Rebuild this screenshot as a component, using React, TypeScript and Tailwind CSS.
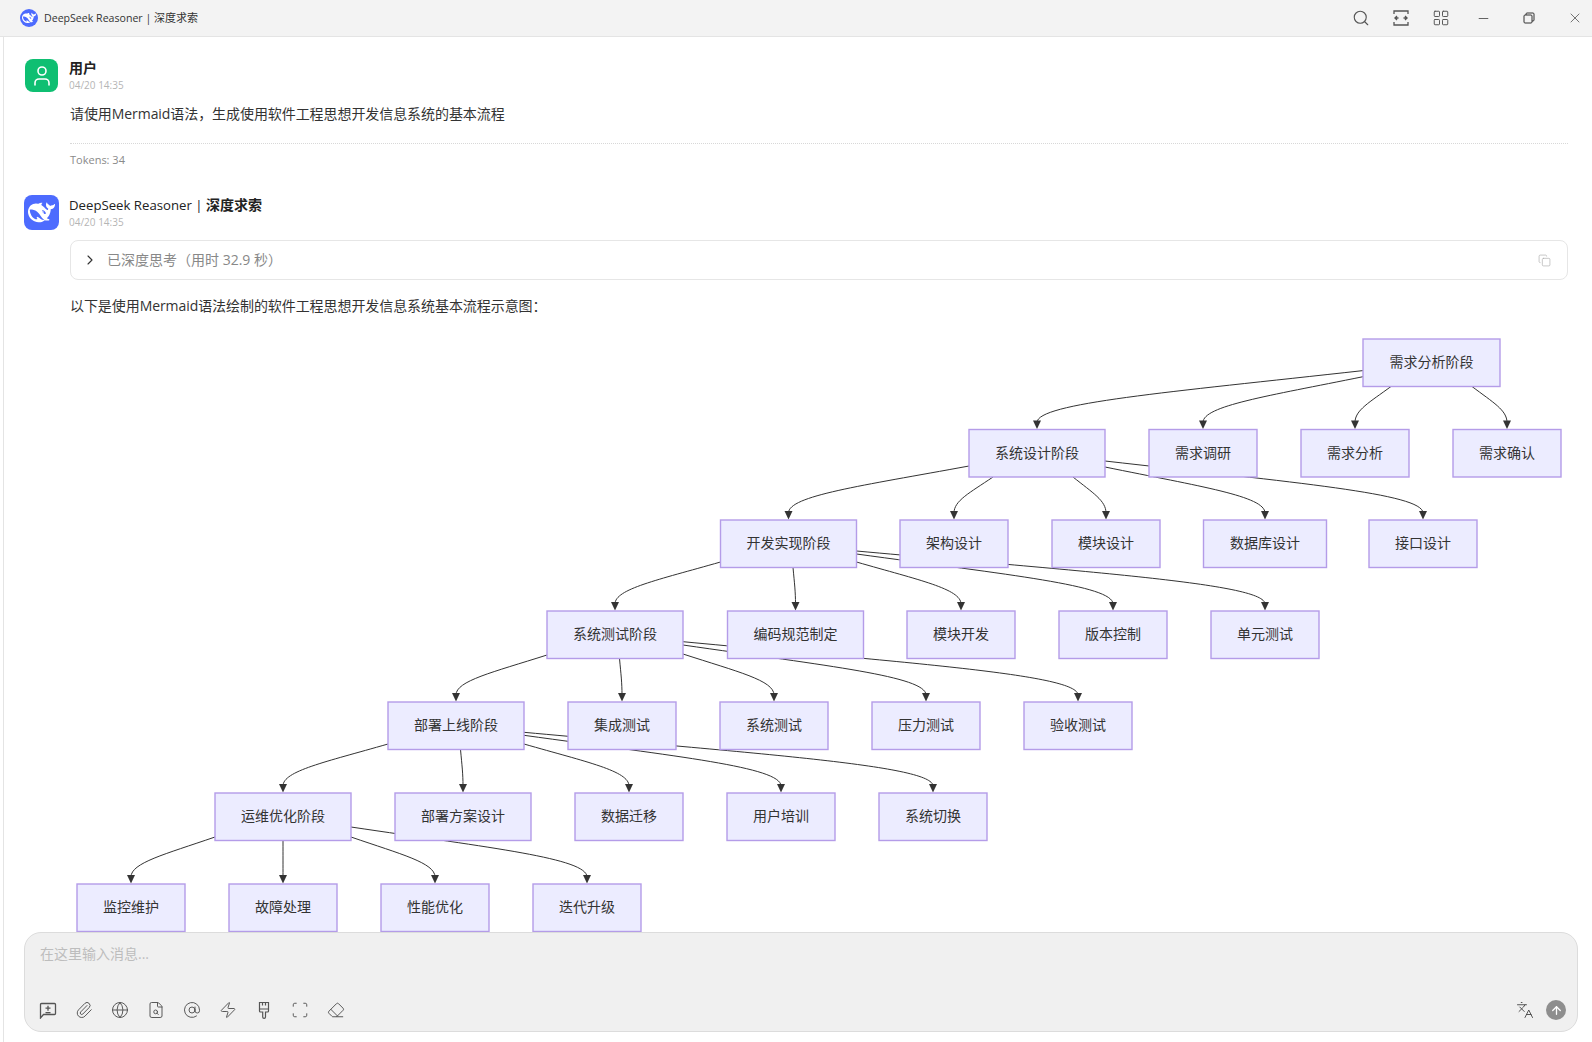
import {
  AtSign,
  ArrowUp,
  ChevronRight,
  Copy,
  Eraser,
  FileSearch,
  Globe,
  Languages,
  LayoutGrid,
  Minus,
  Paperclip,
  Scan,
  Search,
  User,
  X,
  Zap,
} from "lucide-react";
import type { ReactNode } from "react";

const WHALE =
  "M23.748 4.482c-.254-.124-.364.113-.512.234-.051.039-.094.09-.137.136-.372.397-.806.657-1.373.626-.829-.046-1.537.214-2.163.848-.133-.782-.575-1.248-1.247-1.548-.352-.156-.708-.311-.955-.65-.172-.241-.219-.51-.305-.774-.055-.16-.11-.323-.293-.35-.2-.031-.278.136-.356.276-.313.572-.434 1.202-.422 1.84.027 1.436.633 2.58 1.838 3.393.137.093.172.187.129.323-.082.28-.18.552-.266.833-.055.179-.137.217-.329.14a5.526 5.526 0 01-1.736-1.18c-.857-.828-1.631-1.742-2.597-2.458a11.365 11.365 0 00-.689-.471c-.985-.957.13-1.743.388-1.836.27-.098.093-.432-.779-.428-.872.004-1.67.295-2.687.684a3.055 3.055 0 01-.465.137 9.597 9.597 0 00-2.883-.102c-1.885.21-3.39 1.102-4.497 2.623C.082 8.606-.231 10.684.152 12.85c.403 2.284 1.569 4.175 3.36 5.653 1.858 1.533 3.997 2.284 6.438 2.14 1.482-.085 3.133-.284 4.994-1.86.47.234.962.327 1.78.397.63.059 1.236-.03 1.705-.128.735-.156.684-.837.419-.961-2.155-1.004-1.682-.595-2.113-.926 1.096-1.296 2.746-2.642 3.392-7.003.05-.347.007-.565 0-.845-.004-.17.035-.237.23-.256a4.173 4.173 0 001.545-.475c1.396-.763 1.96-2.015 2.093-3.517.02-.23-.004-.467-.247-.588zM11.581 18c-2.089-1.642-3.102-2.183-3.52-2.16-.392.024-.321.471-.235.763.09.288.207.486.371.739.114.167.192.416-.113.603-.673.416-1.842-.14-1.897-.167-1.361-.802-2.5-1.86-3.301-3.307-.774-1.393-1.224-2.887-1.298-4.482-.02-.386.093-.522.477-.592a4.696 4.696 0 011.529-.039c2.132.312 3.946 1.265 5.468 2.774.868.86 1.525 1.887 2.202 2.891.72 1.066 1.494 2.082 2.48 2.914.348.292.625.514.891.677-.802.09-2.14.11-3.054-.614zm1-6.44a.306.306 0 01.415-.287.302.302 0 01.2.288.306.306 0 01-.31.307.303.303 0 01-.304-.308zm3.11 1.596c-.2.081-.399.151-.59.16a1.245 1.245 0 01-.798-.254c-.274-.23-.47-.358-.552-.758a1.73 1.73 0 01.016-.588c.07-.327-.008-.537-.239-.727-.187-.156-.426-.199-.688-.199a.559.559 0 01-.254-.078c-.11-.054-.2-.19-.114-.358.028-.054.16-.186.192-.21.356-.202.767-.136 1.146.016.352.144.618.408 1.001.782.391.451.462.576.685.914.176.265.336.537.445.848.067.195-.019.354-.25.452z";

function Whale({ size }: { size: number }) {
  return (
    <svg width={size} height={size} viewBox="0 0 24 24" fill="#fff">
      <path d={WHALE} />
    </svg>
  );
}

// Diagram coordinates are page pixels, the viewBox starts at the svg's own offset
const NODE_H = 47.5;
const ROW_TOPS = [339, 429.5, 520, 611, 702, 793, 884];

const NODES: [number, number, number, string][] = [
  [0, 1363, 137, "需求分析阶段"],
  [1, 969, 136, "系统设计阶段"],
  [1, 1149, 108, "需求调研"],
  [1, 1301, 108, "需求分析"],
  [1, 1453, 108, "需求确认"],
  [2, 720.5, 136, "开发实现阶段"],
  [2, 900, 108, "架构设计"],
  [2, 1052, 108, "模块设计"],
  [2, 1203.5, 123, "数据库设计"],
  [2, 1369, 108, "接口设计"],
  [3, 547, 136, "系统测试阶段"],
  [3, 727.5, 136, "编码规范制定"],
  [3, 907, 108, "模块开发"],
  [3, 1059, 108, "版本控制"],
  [3, 1211, 108, "单元测试"],
  [4, 388, 136, "部署上线阶段"],
  [4, 568, 108, "集成测试"],
  [4, 720, 108, "系统测试"],
  [4, 872, 108, "压力测试"],
  [4, 1024, 108, "验收测试"],
  [5, 215, 136, "运维优化阶段"],
  [5, 395, 136, "部署方案设计"],
  [5, 575, 108, "数据迁移"],
  [5, 727, 108, "用户培训"],
  [5, 879, 108, "系统切换"],
  [6, 77, 108, "监控维护"],
  [6, 229, 108, "故障处理"],
  [6, 381, 108, "性能优化"],
  [6, 533, 108, "迭代升级"],
];

// [start x, start y, arrow x, row the arrow lands on]
const EDGES: [number, number, number, number][] = [
  [1363, 370.6, 1037, 1],
  [1363, 376.7, 1203, 1],
  [1391, 386.5, 1355, 1],
  [1472, 386.5, 1507, 1],
  [969, 466, 788.5, 2],
  [993, 477, 954, 2],
  [1073, 477, 1106, 2],
  [1105, 467, 1265, 2],
  [1105, 461, 1423, 2],
  [720.5, 562, 615, 3],
  [793, 567.5, 795.5, 3],
  [856.5, 562, 961, 3],
  [856.5, 554, 1113, 3],
  [856.5, 551, 1265, 3],
  [547, 655, 456, 4],
  [619.5, 658.5, 622, 4],
  [683, 654, 774, 4],
  [683, 645, 926, 4],
  [683, 641.7, 1078, 4],
  [388, 744, 283, 5],
  [460.5, 749.5, 463, 5],
  [524, 744, 629, 5],
  [524, 735.3, 781, 5],
  [524, 732.3, 933, 5],
  [215, 837, 131, 6],
  [283, 840.5, 283, 6],
  [351, 837, 435, 6],
  [351, 827, 587, 6],
];

function edgePath(x1: number, y1: number, x2: number, y2: number) {
  const dx = x2 - x1;
  const dy = y2 - y1;
  return `M${x1} ${y1} C${x1 + 0.6 * dx} ${y1 + 0.37 * dy} ${x2} ${y1 + 0.55 * dy} ${x2} ${y2 - 7}`;
}

function Flowchart() {
  return (
    <svg className="mt-[14px] block" width={1497} height={612} viewBox="70 330 1497 612">
      {EDGES.map(([x1, y1, x2, row]) => {
        const y2 = ROW_TOPS[row];
        return (
          <g key={`${x1}-${y1}-${x2}`}>
            <path d={edgePath(x1, y1, x2, y2)} fill="none" stroke="#333" strokeWidth={1} />
            <polygon points={`${x2 - 4},${y2 - 9} ${x2 + 4},${y2 - 9} ${x2},${y2 - 0.5}`} fill="#333" />
          </g>
        );
      })}
      {NODES.map(([row, x, w, label]) => (
        <g key={`${row}-${label}`}>
          <rect x={x} y={ROW_TOPS[row]} width={w} height={NODE_H} fill="#ECECFF" stroke="#b49ce8" strokeWidth={1.4} />
          <text
            x={x + w / 2}
            y={ROW_TOPS[row] + NODE_H / 2 - 1}
            textAnchor="middle"
            dominantBaseline="central"
            fontSize={14}
            fill="#333"
          >
            {label}
          </text>
        </g>
      ))}
    </svg>
  );
}

function TitleBar() {
  return (
    <header className="flex h-[37px] shrink-0 items-center overflow-hidden border-b border-[#e4e4e4] bg-[#f3f3f3]">
      <div className="ml-5 flex h-[18px] w-[18px] items-center justify-center rounded-full bg-[#4d6bfe]">
        <Whale size={14} />
      </div>
      <span className="ml-[6px] text-[10.6px] text-[#333]">
        DeepSeek Reasoner | <span className="text-[11px]">深度求索</span>
      </span>
      <div className="ml-auto mr-[-6px] flex items-center text-[#555]">
        <span className="flex w-10 justify-center">
          <Search size={18} strokeWidth={1.5} />
        </span>
        <span className="flex w-10 justify-center">
          <svg width="18" height="18" viewBox="0 0 18 18" fill="none" stroke="currentColor" strokeWidth="1.3">
            <path d="M2 5V2h14v3M2 13v3h14v-3M2.5 9h4M11.5 9h4M5 7 3 9l2 2M13 7l2 2-2 2" />
          </svg>
        </span>
        <span className="flex w-10 justify-center">
          <LayoutGrid size={18} strokeWidth={1.3} />
        </span>
        <span className="ml-[-1px] flex w-[46px] justify-center text-[#333]">
          <Minus size={15} strokeWidth={1.2} />
        </span>
        <span className="flex w-[46px] justify-center text-[#333]">
          <svg width="12" height="12" viewBox="0 0 12 12" fill="none" stroke="currentColor" strokeWidth="1">
            <rect x="1" y="3" width="8" height="8" rx="1" />
            <path d="M3 3V2a1 1 0 0 1 1-1h6a1 1 0 0 1 1 1v6a1 1 0 0 1-1 1H9" />
          </svg>
        </span>
        <span className="flex w-[46px] justify-center pr-[1px] text-[#333]">
          <X size={16} strokeWidth={1} />
        </span>
      </div>
    </header>
  );
}

function MessageHeader({ avatar, name }: { avatar: ReactNode; name: ReactNode }) {
  return (
    <div className="flex">
      {avatar}
      <div className="ml-[10px]">
        <div className="h-[18px] text-[13.2px] leading-[18px] text-[#222]">{name}</div>
        <div className="mt-[2px] text-[10px] leading-[14px] text-[#b5b5b5]">04/20 14:35</div>
      </div>
    </div>
  );
}

function ChatArea() {
  return (
    <main className="min-h-0 flex-1 overflow-hidden pl-5 pr-6 pt-[21px]">
      <MessageHeader
        avatar={
          <div className="ml-px mr-px mt-px flex h-[33px] w-[33px] items-center justify-center rounded-lg bg-[#0fbf72] text-white">
            <User size={24} strokeWidth={1.6} />
          </div>
        }
        name={<b className="text-sm">用户</b>}
      />
      <div className="ml-[46px]">
        <p className="mt-[12px] text-sm leading-5 tracking-[-0.005em] text-[#333]">
          请使用Mermaid语法，生成使用软件工程思想开发信息系统的基本流程
        </p>
        <div className="mt-[19px] border-t border-dotted border-[#d8d8d8]" />
        <p className="mt-[9px] text-[11px] leading-[14px] text-[#8a8a8a]">Tokens: 34</p>
      </div>

      <div className="mt-[28px]">
        <MessageHeader
          avatar={
            <div className="flex h-[35px] w-[35px] items-center justify-center rounded-lg bg-[#4d6bfe]">
              <Whale size={27} />
            </div>
          }
          name={
            <>
              DeepSeek Reasoner | <b className="text-sm">深度求索</b>
            </>
          }
        />
      </div>
      <div className="ml-[46px]">
        <div className="mt-[10px] flex h-10 items-center rounded-lg border border-[#e6e6e6] pl-[11px] pr-[16px]">
          <ChevronRight size={16} strokeWidth={1.7} className="text-[#333]" />
          <span className="ml-[9px] text-sm text-[#888]">已深度思考（用时 32.9 秒）</span>
          <Copy size={13} strokeWidth={1.2} className="ml-auto text-[#aaa]" />
        </div>
        <p className="mt-4 text-sm leading-5 tracking-[-0.005em] text-[#333]">
          以下是使用Mermaid语法绘制的软件工程思想开发信息系统基本流程示意图：
        </p>
        <Flowchart />
      </div>
    </main>
  );
}

function Tool({ children }: { children: ReactNode }) {
  return <span className="flex w-9 justify-center text-[#555]">{children}</span>;
}

function InputBar() {
  return (
    <footer className="mb-[10px] ml-5 mr-[14px] flex h-[100px] shrink-0 flex-col rounded-[17px] border border-[#dcdcdc] bg-[#f0f0f0]">
      <div className="pl-[15px] pt-[11px] text-sm leading-5 text-[#bdbdbd]">在这里输入消息...</div>
      <div className="mt-auto flex items-center pb-[11px] pl-[5px] pr-[11px]">
        <Tool>
          <svg width="18" height="18" viewBox="0 0 18 18" fill="none" stroke="currentColor" strokeWidth="1.3">
            <path d="M1.5 17V3.5a1 1 0 0 1 1-1h13a1 1 0 0 1 1 1v9a1 1 0 0 1-1 1H4.500L1.500 17zM9 4.700v5M6.500 7.200h5M6.500 11.600h5" />
          </svg>
        </Tool>
        <Tool>
          <Paperclip size={18} strokeWidth={1.3} />
        </Tool>
        <Tool>
          <Globe size={18} strokeWidth={1.3} />
        </Tool>
        <Tool>
          <FileSearch size={18} strokeWidth={1.3} />
        </Tool>
        <Tool>
          <AtSign size={18} strokeWidth={1.3} />
        </Tool>
        <Tool>
          <Zap size={18} strokeWidth={1.3} />
        </Tool>
        <Tool>
          <svg width="18" height="18" viewBox="0 0 18 18" fill="none" stroke="currentColor" strokeWidth="1.2">
            <path d="M4.500 1.500h9v8.500a1 1 0 0 1-1 1h-2v5a1.400 1.400 0 0 1-2.800 0v-5h-2.200a1 1 0 0 1-1-1V1.500zM4.500 8h9M7.500 1.500v3M10.500 1.500v3" />
          </svg>
        </Tool>
        <Tool>
          <Scan size={18} strokeWidth={1.3} />
        </Tool>
        <Tool>
          <Eraser size={18} strokeWidth={1.3} />
        </Tool>
        <span className="ml-auto flex items-center">
          <Languages size={18} strokeWidth={1.2} className="text-[#444]" />
          <span className="ml-3 flex h-5 w-5 items-center justify-center rounded-full bg-[#8e8e8e] text-white">
            <ArrowUp size={13} strokeWidth={2.4} />
          </span>
        </span>
      </div>
    </footer>
  );
}

export default function App() {
  return (
    <div className="flex h-[1042px] w-[1592px] flex-col overflow-hidden bg-white font-['Open_Sans','Noto_Sans_CJK_SC',sans-serif]">
      <TitleBar />
      <div className="ml-[3px] flex min-h-0 flex-1 flex-col border-l border-[#e4e4e4]">
        <ChatArea />
        <InputBar />
      </div>
    </div>
  );
}
